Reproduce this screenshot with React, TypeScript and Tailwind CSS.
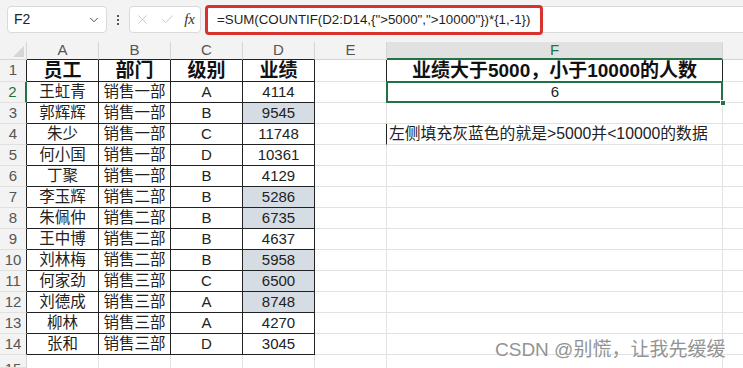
import { ChevronDown, X, Check } from "lucide-react";

const cjk = "font-['Liberation_Sans','Noto_Sans_CJK_SC',sans-serif]";

type Row = { name: string; dept: string; level: string; score: number };

const rows: Row[] = [
  { name: "王虹青", dept: "销售一部", level: "A", score: 4114 },
  { name: "郭辉辉", dept: "销售一部", level: "B", score: 9545 },
  { name: "朱少", dept: "销售一部", level: "C", score: 11748 },
  { name: "何小国", dept: "销售一部", level: "D", score: 10361 },
  { name: "丁聚", dept: "销售一部", level: "B", score: 4129 },
  { name: "李玉辉", dept: "销售二部", level: "B", score: 5286 },
  { name: "朱佩仲", dept: "销售二部", level: "B", score: 6735 },
  { name: "王中博", dept: "销售二部", level: "B", score: 4637 },
  { name: "刘林梅", dept: "销售二部", level: "B", score: 5958 },
  { name: "何家劲", dept: "销售三部", level: "C", score: 6500 },
  { name: "刘德成", dept: "销售三部", level: "A", score: 8748 },
  { name: "柳林", dept: "销售三部", level: "A", score: 4270 },
  { name: "张和", dept: "销售三部", level: "D", score: 3045 },
];

const colLetters = ["A", "B", "C", "D", "E"];

function FormulaBar() {
  return (
    <div className="flex h-[42px] items-start bg-[#f3f3f3] pl-[7px] pt-[6px]">
      <div className="flex h-[27px] w-[100px] items-center justify-between rounded-[4px] border border-[#dadada] bg-white pl-[6px] pr-[5px]">
        <span className="text-[14px] text-[#222] font-['Liberation_Sans',sans-serif]">F2</span>
        <ChevronDown className="h-[14px] w-[14px] text-[#444]" strokeWidth={1.6} />
      </div>
      <div className="flex h-[27px] w-[22px] flex-col items-center justify-center gap-[2px]">
        <span className="h-[2px] w-[2px] bg-[#555]" />
        <span className="h-[2px] w-[2px] bg-[#555]" />
        <span className="h-[2px] w-[2px] bg-[#555]" />
      </div>
      <div className="flex h-[27px] w-[72px] items-center justify-between rounded-[4px] border border-[#dadada] bg-white px-[5px]">
        <X className="h-[15px] w-[15px] text-[#bdbdbd]" strokeWidth={1.3} />
        <Check className="h-[15px] w-[15px] text-[#bdbdbd]" strokeWidth={1.3} />
        <span className="text-[15px] italic text-[#333] font-['Liberation_Serif',serif]">fx</span>
      </div>
      <div className="ml-[5px] flex h-[27px] flex-1 items-center border-y border-[#dadada] bg-white">
        <div className="-my-[2px] -ml-[1px] flex h-[30px] w-[338px] items-center rounded-[4px] border-[3px] border-[#d8322d] pl-[9px]">
          <span className="whitespace-nowrap text-[13.3px] text-[#1e1e1e] font-['Liberation_Sans',sans-serif]">
            {'=SUM(COUNTIF(D2:D14,{">5000",">10000"})*{1,-1})'}
          </span>
        </div>
      </div>
    </div>
  );
}

function RowHead({ n, selected }: { n: number; selected?: boolean }) {
  return (
    <div
      className={`flex items-center justify-center overflow-hidden bg-[#f3f3f3] border-b border-[#e0e0e0] text-[15px] font-['Liberation_Sans',sans-serif] ${
        selected ? "border-r-2 border-r-[#217346] text-[#217346]" : n <= 14 ? "border-r border-r-[#222] text-[#555]" : "border-r border-r-[#d5d5d5] text-[#555]"
      } ${n === 15 ? "items-start pt-[3px]" : ""}`}
    >
      {n}
    </div>
  );
}

export default function App() {
  return (
    <div className={`relative h-[368px] w-[743px] overflow-hidden bg-white ${cjk}`}>
      <FormulaBar />
      <div className="grid h-[326px] grid-cols-[27px_72px_72px_72px_72px_72px_336px_1fr] grid-rows-[18px_22px_repeat(13,21px)_1fr]">
        {/* column headers */}
        <div className="relative bg-[#f3f3f3] border-r border-b border-[#d5d5d5]">
          <svg className="absolute bottom-[2px] right-[2px]" width="11" height="11" viewBox="0 0 11 11">
            <path d="M11 0 L11 11 L0 11 Z" fill="#d6d6d6" />
          </svg>
        </div>
        {colLetters.map((c, i) => (
          <div
            key={c}
            className={`flex items-center justify-center bg-[#f3f3f3] border-r border-[#d5d5d5] text-[15px] text-[#555] font-['Liberation_Sans',sans-serif] border-b ${
              i < 4 ? "border-b-[#222]" : "border-b-[#d5d5d5]"
            }`}
          >
            {c}
          </div>
        ))}
        <div className="flex items-center justify-center bg-[#e1e1e1] border-r border-r-[#d5d5d5] border-b-2 border-b-[#217346] text-[15px] text-[#217346] font-['Liberation_Sans',sans-serif]">
          F
        </div>
        <div className="bg-[#f3f3f3] border-b border-[#d5d5d5]" />

        {/* row 1 */}
        <RowHead n={1} />
        {["员工", "部门", "级别", "业绩"].map((h) => (
          <div key={h} className="flex items-center justify-center border-r border-b border-[#222] pt-[1px] text-[19px] font-bold text-[#111]">
            {h}
          </div>
        ))}
        <div className="border-r border-r-[#222] border-b border-b-[#e2e2e2]" />
        <div className="flex items-center justify-center whitespace-nowrap border-r border-r-[#222] pt-[1px] text-[19px] font-bold text-[#111]">
          业绩大于5000，小于10000的人数
        </div>
        <div className="border-b border-[#e2e2e2]" />

        {/* rows 2-14 */}
        {rows.map((r, i) => {
          const n = i + 2;
          const hit = r.score > 5000 && r.score < 10000;
          return [
            <RowHead key={`h${n}`} n={n} selected={n === 2} />,
            <div key={`a${n}`} className="flex items-center justify-center border-r border-b border-[#222] text-[15.5px] text-[#222]">
              {r.name}
            </div>,
            <div key={`b${n}`} className="flex items-center justify-center border-r border-b border-[#222] text-[15.5px] text-[#222]">
              {r.dept}
            </div>,
            <div key={`c${n}`} className="flex items-center justify-center border-r border-b border-[#222] text-[15px] text-[#222]">
              {r.level}
            </div>,
            <div
              key={`d${n}`}
              className={`flex items-center justify-center border-r border-b border-[#222] text-[15px] text-[#222] ${hit ? "bg-[#d6dce4]" : ""}`}
            >
              {r.score}
            </div>,
            <div
              key={`e${n}`}
              className={`border-b border-[#e2e2e2] border-r ${n === 4 ? "border-r-[#222]" : "border-r-[#e2e2e2]"}`}
            />,
            n === 2 ? (
              <div key={`f${n}`} className="relative flex items-center justify-center text-[15px] text-[#222]">
                6
                <div className="absolute -left-[1px] -top-[1px] bottom-0 right-0 border-2 border-[#217346]" />
                <div className="absolute -bottom-[3px] -right-[3px] h-[6px] w-[6px] border border-white bg-[#217346]" />
              </div>
            ) : n === 4 ? (
              <div key={`f${n}`} className="flex items-center whitespace-nowrap border-r border-b border-[#e2e2e2] pl-[2px] text-[15.8px] text-[#222]">
                左侧填充灰蓝色的就是&gt;5000并&lt;10000的数据
              </div>
            ) : (
              <div key={`f${n}`} className="border-r border-b border-[#e2e2e2]" />
            ),
            <div key={`g${n}`} className="border-b border-[#e2e2e2]" />,
          ];
        })}

        {/* row 15 */}
        <RowHead n={15} />
        <div className="border-r border-[#e2e2e2]" />
        <div className="border-r border-[#e2e2e2]" />
        <div className="border-r border-[#e2e2e2]" />
        <div className="border-r border-[#e2e2e2]" />
        <div className="border-r border-[#e2e2e2]" />
        <div className="border-r border-[#e2e2e2]" />
        <div />
      </div>

      <div className="absolute left-[495px] top-[336px] whitespace-nowrap text-[19px] text-[#939393] [text-shadow:0_0_2px_#fff]">
        CSDN @别慌，让我先缓缓
      </div>
    </div>
  );
}
